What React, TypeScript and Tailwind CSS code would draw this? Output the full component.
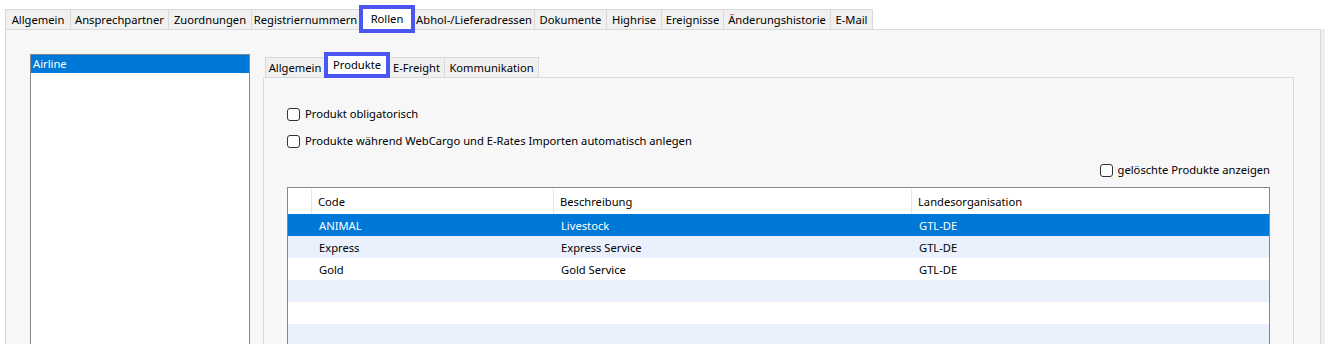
const topTabs = [
  { label: "Allgemein", w: "w-[66px]" },
  { label: "Ansprechpartner", w: "w-[99px]" },
  { label: "Zuordnungen", w: "w-[84px]" },
  { label: "Registriernummern", w: "w-[109px]" },
  { label: "Rollen", w: "w-[56px]", active: true },
  { label: "Abhol-/Lieferadressen", w: "w-[122px]" },
  { label: "Dokumente", w: "w-[73px]" },
  { label: "Highrise", w: "w-[56px]" },
  { label: "Ereignisse", w: "w-[63px]" },
  { label: "Änderungshistorie", w: "w-[108px]" },
  { label: "E-Mail", w: "w-[43px]" },
];

const subTabs = [
  { label: "Allgemein", w: "w-[60px]" },
  { label: "Produkte", w: "w-[66px]", active: true },
  { label: "E-Freight", w: "w-[57px]" },
  { label: "Kommunikation", w: "w-[95px]" },
];

const rows = [
  { code: "ANIMAL", desc: "Livestock", org: "GTL-DE" },
  { code: "Express", desc: "Express Service", org: "GTL-DE" },
  { code: "Gold", desc: "Gold Service", org: "GTL-DE" },
  { code: "", desc: "", org: "" },
  { code: "", desc: "", org: "" },
  { code: "", desc: "", org: "" },
];

function Tab({ label, w, active }: { label: string; w: string; active?: boolean }) {
  if (active) {
    return (
      <div
        className={`${w} relative z-10 -mx-px -mt-[4px] -mb-[4px] h-[28px] border-[4px] border-[#4a55f2] bg-white flex items-center justify-center whitespace-nowrap`}
      >
        {label}
      </div>
    );
  }
  return (
    <div
      className={`${w} h-[20px] -ml-px first:ml-0 border border-b-0 border-[#d9d9d9] bg-[#f0f0f0] flex items-center justify-center whitespace-nowrap overflow-hidden`}
    >
      {label}
    </div>
  );
}

function Check({ label, className = "" }: { label: string; className?: string }) {
  return (
    <div className={`flex items-center h-[16px] gap-[5px] ${className}`}>
      <span className="w-[13px] h-[13px] rounded-[3px] border border-[#333] bg-white" />
      <span>{label}</span>
    </div>
  );
}

export default function App() {
  return (
    <div
      className="h-[344px] w-[1325px] overflow-hidden bg-white text-[11.2px] text-black leading-[16px]"
      style={{ fontFamily: '"Noto Sans", "Segoe UI", sans-serif' }}
    >
      {/* top tabs */}
      <div className="flex items-end pt-[9px] pl-[5px] h-[29px]">
        {topTabs.map((t) => (
          <Tab key={t.label} {...t} />
        ))}
      </div>

      <div className="flex">
        {/* outer panel */}
        <div className="ml-[5px] w-[1316px] h-[330px] border border-[#dadada] bg-[#f7f7f7] flex items-start pt-[24px] pl-[24px]">
          {/* role list */}
          <div className="w-[220px] h-[300px] border border-[#828790] bg-white">
            <div className="h-[18px] bg-[#0078d7] text-white flex items-center pl-[2px]">Airline</div>
          </div>

          {/* role details */}
          <div className="ml-[13px] mt-[3px] w-[1031px]">
            <div className="flex items-end h-[20px] pl-[2px]">
              {subTabs.map((t) =>
                t.active ? (
                  <div
                    key={t.label}
                    className={`${t.w} relative z-10 -mx-px -mt-[5px] -mb-px h-[26px] border-[4px] border-[#4a55f2] bg-white flex items-center justify-center whitespace-nowrap`}
                  >
                    {t.label}
                  </div>
                ) : (
                  <div
                    key={t.label}
                    className={`${t.w} h-[20px] -ml-px first:ml-0 border border-b-0 border-[#d9d9d9] bg-[#f0f0f0] flex items-center justify-center whitespace-nowrap`}
                  >
                    {t.label}
                  </div>
                )
              )}
            </div>

            <div className="h-[300px] border border-[#dadada] bg-[#f7f7f7] px-[23px] pt-[28px]">
              <Check label="Produkt obligatorisch" />
              <Check label="Produkte während WebCargo und E-Rates Importen automatisch anlegen" className="mt-[11px]" />
              <Check label="gelöschte Produkte anzeigen" className="mt-[13px] justify-end" />

              {/* products grid */}
              <div className="mt-[9px] border-l border-t border-r border-[#828790] bg-white">
                <div className="flex h-[26px] items-center pt-[1px]">
                  <div className="w-[24px] h-full border-r border-[#e5e5e5]" />
                  <div className="w-[242px] h-full border-r border-[#e5e5e5] flex items-center pl-[6px]">Code</div>
                  <div className="w-[358px] h-full border-r border-[#e5e5e5] flex items-center pl-[6px]">Beschreibung</div>
                  <div className="flex-1 h-full flex items-center pl-[6px]">Landesorganisation</div>
                </div>
                {rows.map((r, i) => (
                  <div
                    key={i}
                    className={`flex h-[22px] items-center pt-[1px] ${
                      i === 0 ? "bg-[#0078d7] text-white" : i % 2 === 1 ? "bg-[#eaf1fc]" : "bg-white"
                    }`}
                  >
                    <div className="w-[25px]" />
                    <div className="w-[242px] pl-[6px]">{r.code}</div>
                    <div className="w-[358px] pl-[6px]">{r.desc}</div>
                    <div className="flex-1 pl-[6px]">{r.org}</div>
                  </div>
                ))}
              </div>
            </div>
          </div>
        </div>
        <div className="w-[4px] h-[330px] bg-[#efefef]" />
      </div>
    </div>
  );
}
